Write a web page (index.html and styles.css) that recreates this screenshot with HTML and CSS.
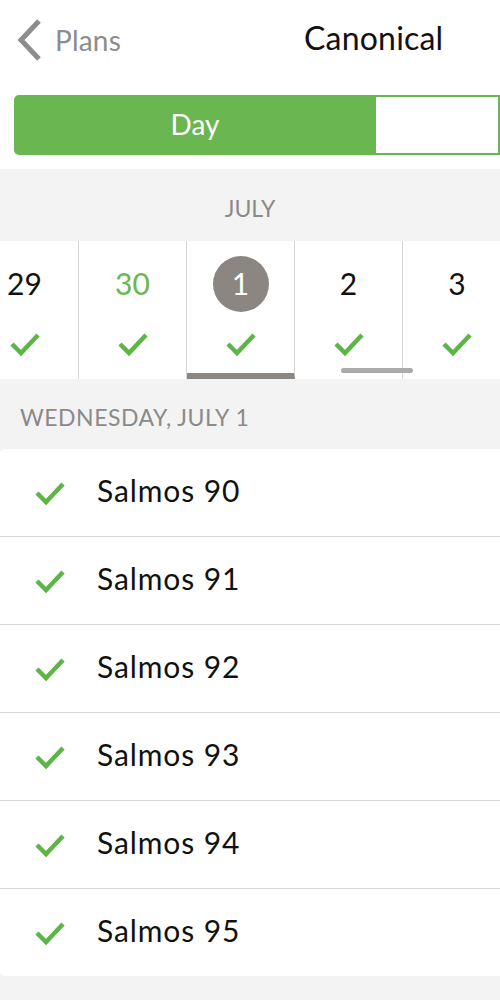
FILE: index.html
```html
<!doctype html>
<html>
<head>
<meta charset="utf-8">
<title>Canonical</title>
<link rel="stylesheet" href="styles.css">
</head>
<body>
<div class="page">
    <div class="header">
        <a class="back">
            <svg class="back-icon" width="30" height="44" viewBox="0 0 30 44"><polyline points="25,3 7,22 25,41" fill="none" stroke="#8c8c8c" stroke-width="5"/></svg>
            <span class="back-text">Plans</span>
        </a>
        <div class="title">Canonical</div>
    </div>

    <div class="segment">
        <div class="seg seg-on">Day</div>
        <div class="seg seg-off"></div>
    </div>

    <div class="month">JULY</div>

    <div class="strip">
        <div class="days">
            <div class="day"><span class="num">29</span><svg class="tick" width="32" height="26" viewBox="0 0 32 26"><polyline points="3,13 12,22 29,4" fill="none" stroke="#5db548" stroke-width="4.5"/></svg></div>
            <div class="day"><span class="num num-green">30</span><svg class="tick" width="32" height="26" viewBox="0 0 32 26"><polyline points="3,13 12,22 29,4" fill="none" stroke="#5db548" stroke-width="4.5"/></svg></div>
            <div class="day day-on"><span class="num num-circle">1</span><svg class="tick" width="32" height="26" viewBox="0 0 32 26"><polyline points="3,13 12,22 29,4" fill="none" stroke="#5db548" stroke-width="4.5"/></svg></div>
            <div class="day"><span class="num">2</span><svg class="tick" width="32" height="26" viewBox="0 0 32 26"><polyline points="3,13 12,22 29,4" fill="none" stroke="#5db548" stroke-width="4.5"/></svg></div>
            <div class="day"><span class="num">3</span><svg class="tick" width="32" height="26" viewBox="0 0 32 26"><polyline points="3,13 12,22 29,4" fill="none" stroke="#5db548" stroke-width="4.5"/></svg></div>
        </div>
        <div class="scrollbar"></div>
    </div>

    <div class="date">WEDNESDAY, JULY 1</div>

    <ul class="list">
        <li class="item"><svg class="item-tick" width="32" height="26" viewBox="0 0 32 26"><polyline points="3,13 12,22 29,4" fill="none" stroke="#5db548" stroke-width="4.5"/></svg>Salmos 90</li>
        <li class="item"><svg class="item-tick" width="32" height="26" viewBox="0 0 32 26"><polyline points="3,13 12,22 29,4" fill="none" stroke="#5db548" stroke-width="4.5"/></svg>Salmos 91</li>
        <li class="item"><svg class="item-tick" width="32" height="26" viewBox="0 0 32 26"><polyline points="3,13 12,22 29,4" fill="none" stroke="#5db548" stroke-width="4.5"/></svg>Salmos 92</li>
        <li class="item"><svg class="item-tick" width="32" height="26" viewBox="0 0 32 26"><polyline points="3,13 12,22 29,4" fill="none" stroke="#5db548" stroke-width="4.5"/></svg>Salmos 93</li>
        <li class="item"><svg class="item-tick" width="32" height="26" viewBox="0 0 32 26"><polyline points="3,13 12,22 29,4" fill="none" stroke="#5db548" stroke-width="4.5"/></svg>Salmos 94</li>
        <li class="item"><svg class="item-tick" width="32" height="26" viewBox="0 0 32 26"><polyline points="3,13 12,22 29,4" fill="none" stroke="#5db548" stroke-width="4.5"/></svg>Salmos 95</li>
    </ul>
</div>
</body>
</html>
```

FILE: styles.css
```css
body { margin: 0; font-family: Lato, "Noto Sans", sans-serif; color: #111; background: #f3f3f3; }
.page { width: 500px; height: 1000px; overflow: hidden; background: #f3f3f3; }

.header { height: 85px; background: #fff; display: flex; align-items: center; padding-bottom: 6px; box-sizing: border-box; }
.back { display: flex; align-items: center; margin-left: 14px; }
.back-icon { display: block; margin-top: 1px; }
.back-text { font-size: 28px; color: #8c8c8c; margin-left: 11px; letter-spacing: 0.2px; }
.title { font-size: 32px; margin-left: 183px; margin-bottom: 5px; color: #111; letter-spacing: 0.2px; }

.segment { background: #fff; padding: 10px 0 14px 14px; display: flex; }
.seg { height: 60px; box-sizing: border-box; }
.seg-on { width: 362px; background: #6ab651; color: #fff; font-size: 28px; line-height: 58px; text-align: center; border-radius: 5px 0 0 5px; }
.seg-off { flex: 1; border: 2px solid #6ab651; border-left: none; }

.month { height: 72px; line-height: 78px; text-align: center; font-size: 23px; color: #8a8a8a; }

.strip { background: #fff; height: 138px; overflow: hidden; position: relative; }
.days { display: flex; margin-left: -29px; height: 138px; }
.day { width: 108px; flex: none; border-right: 1px solid #d6d6d6; display: flex; flex-direction: column; align-items: center; box-sizing: border-box; }
.day:last-child { border-right: none; }
.day-on { border-bottom: 6px solid #8b8682; }
.num { height: 56px; min-width: 56px; margin-top: 15px; font-size: 30px; line-height: 55px; text-align: center; }
.num-green { color: #6ab651; }
.num-circle { background: #8b8682; color: #fff; border-radius: 50%; }
.tick { margin-top: 19px; display: block; }
.scrollbar { position: absolute; left: 341px; top: 127px; width: 72px; height: 5px; border-radius: 3px; background: #ababab; }

.date { height: 70px; line-height: 76px; padding-left: 20px; font-size: 23px; color: #8a8a8a; letter-spacing: 0.5px; }

.list { list-style: none; margin: 0; padding: 0; background: #fff; border-radius: 5px 0 0 5px; }
.item { height: 88px; display: flex; align-items: center; font-size: 30px; color: #111; border-top: 1px solid #d6d6d6; box-sizing: border-box; padding-bottom: 5px; letter-spacing: 0.9px; }
.item:first-child { border-top: none; height: 87px; }
.item-tick { margin-left: 34px; margin-right: 31px; margin-top: 5px; }
```
